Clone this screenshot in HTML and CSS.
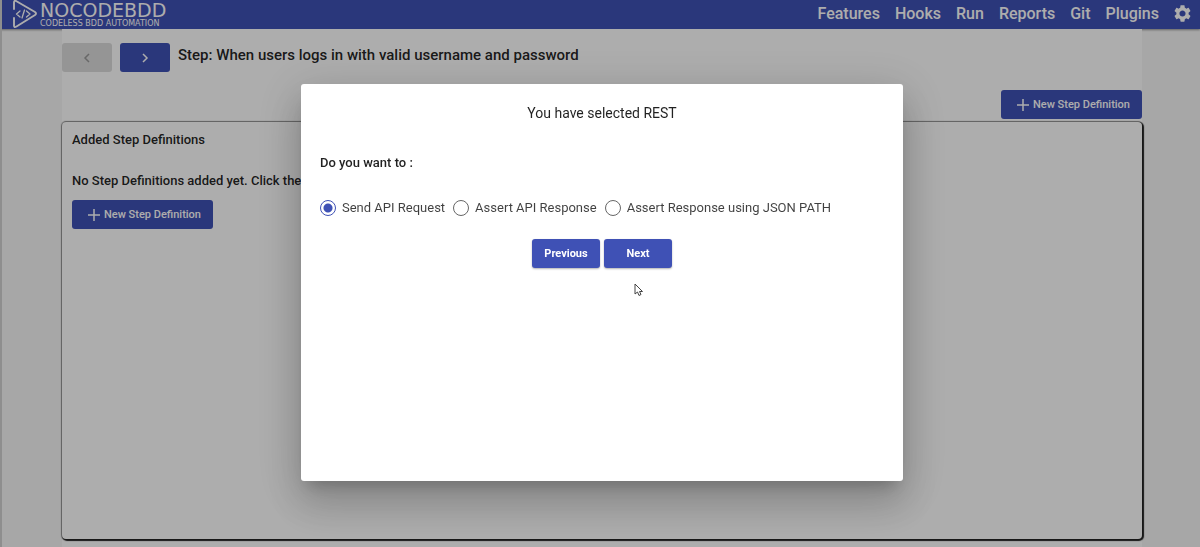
FILE: index.html
```
<!DOCTYPE html>
<html lang="en">
<head>
    <meta charset="UTF-8">
    <meta name="viewport" content="width=device-width, initial-scale=1.0">
    <title>NoCodeBDD</title>
    <link rel="stylesheet" href="styles.css">
</head>
<body>
    <header class="topbar">
        <a href="#" class="logo">
            <svg class="logo-mark" viewBox="0 0 26 30" fill="none" stroke="currentColor" stroke-linecap="round" stroke-linejoin="round">
                <path d="M2 9V2.500Q2 0 4.500 1.200L23 12Q25 13.500 23 15L4.500 26.500Q2 28 2 25.500V18" stroke-width="1.900"/>
                <path d="M8 11L4.500 14L8 17M14.500 11L18 14L14.500 17M12.500 10L10 18" stroke-width="1.300"/>
            </svg>
            <span class="logo-text">
                <span class="logo-name">NOCODEBDD</span>
                <span class="logo-tagline">CODELESS BDD AUTOMATION</span>
            </span>
        </a>
        <nav class="menu">
            <a href="#">Features</a>
            <a href="#">Hooks</a>
            <a href="#">Run</a>
            <a href="#">Reports</a>
            <a href="#">Git</a>
            <a href="#">Plugins</a>
            <a href="#" class="settings" aria-label="Settings">
                <svg viewBox="2 2 20 20" fill="currentColor">
                    <path d="M19.140 12.940c.04-.3.06-.61.06-.94 0-.32-.02-.64-.07-.94l2.030-1.580c.18-.14.23-.41.12-.61l-1.920-3.320c-.12-.22-.37-.29-.59-.22l-2.390.96c-.5-.38-1.030-.7-1.620-.94l-.36-2.540c-.04-.24-.24-.41-.48-.41h-3.840c-.24 0-.43.17-.47.41l-.36 2.540c-.59.24-1.130.57-1.620.94l-2.390-.96c-.22-.08-.47 0-.59.22L2.740 8.870c-.12.21-.08.47.12.61l2.030 1.580c-.05.3-.09.63-.09.94s.02.64.07.94l-2.030 1.580c-.18.14-.23.41-.12.61l1.920 3.320c.12.22.37.29.59.22l2.390-.96c.5.38 1.030.7 1.620.94l.36 2.540c.05.24.24.41.48.41h3.840c.24 0 .44-.17.47-.41l.36-2.540c.59-.24 1.130-.56 1.620-.94l2.390.96c.22.08.47 0 .59-.22l1.920-3.320c.12-.22.07-.47-.12-.61l-2.010-1.580zM12 15.600c-1.980 0-3.600-1.620-3.600-3.600s1.620-3.600 3.600-3.600 3.600 1.620 3.600 3.600-1.620 3.600-3.600 3.600z"/>
                </svg>
            </a>
        </nav>
    </header>

    <main class="page">
        <div class="step-header">
            <button type="button" class="btn btn-arrow" aria-label="Previous step" disabled>
                <svg viewBox="0 0 8 10"><path d="M6 1L2 5L6 9"/></svg>
            </button>
            <button type="button" class="btn btn-arrow" aria-label="Next step">
                <svg viewBox="0 0 8 10"><path d="M2 1L6 5L2 9"/></svg>
            </button>
            <h1>Step: When users logs in with valid username and password</h1>
        </div>
        <div class="actions">
            <button type="button" class="btn btn-add">
                <svg viewBox="0 0 12 12"><path d="M6 0V12M0 6H12"/></svg>
                New Step Definition
            </button>
        </div>
        <section class="card">
            <h2>Added Step Definitions</h2>
            <p>No Step Definitions added yet. Click the</p>
            <button type="button" class="btn btn-add">
                <svg viewBox="0 0 12 12"><path d="M6 0V12M0 6H12"/></svg>
                New Step Definition
            </button>
        </section>
    </main>

    <div class="backdrop">
        <form class="dialog" role="dialog" aria-labelledby="dialog-title">
            <h2 id="dialog-title">You have selected REST</h2>
            <fieldset>
                <legend>Do you want to :</legend>
                <div class="options">
                    <label><input type="radio" name="action" value="send" checked>Send API Request</label>
                    <label><input type="radio" name="action" value="response">Assert API Response</label>
                    <label><input type="radio" name="action" value="json">Assert Response using JSON PATH</label>
                </div>
            </fieldset>
            <div class="dialog-buttons">
                <button type="button" class="btn">Previous</button>
                <button type="button" class="btn">Next</button>
            </div>
        </form>
    </div>

    <svg class="cursor" viewBox="0 0 9 14" aria-hidden="true">
        <path d="M1 1V11L3.500 9L5 12.500L7 11.500L5.500 8.500H8.500Z"/>
    </svg>
</body>
</html>
```

FILE: styles.css
```
* {
    margin: 0;
    padding: 0;
    box-sizing: border-box;
}

body {
    display: flex;
    flex-direction: column;
    min-height: 100vh;
    background: #f6f6f6;
    border-left: 2px solid #d2d2d2;
    font-family: Roboto, sans-serif;
    color: rgba(0, 0, 0, 0.87);
}

/* Top bar */
.topbar {
    display: flex;
    justify-content: space-between;
    height: 29px;
    margin-left: -2px;
    padding: 0 9px 0 12px;
    background: #3f51b5;
    box-shadow: 0 1px 2px rgba(0, 0, 0, 0.4);
    color: #fff;
}

.topbar a {
    color: inherit;
    text-decoration: none;
}

.logo {
    display: flex;
    gap: 2px;
}

.logo-mark {
    width: 26px;
    height: 30px;
}

.logo-text {
    display: flex;
    flex-direction: column;
    padding-top: 1px;
    font-family: "DejaVu Sans", sans-serif;
}

.logo-name {
    font-size: 19px;
    line-height: 19px;
}

.logo-tagline {
    font-size: 8px;
    line-height: 8px;
}

.menu {
    display: flex;
    align-items: center;
    gap: 15px;
    padding-bottom: 3px;
    font-size: 16px;
    font-weight: 500;
}

.settings svg {
    display: block;
    width: 17px;
    height: 17px;
}

/* Buttons */
.btn {
    height: 29px;
    min-width: 68px;
    padding: 0 12px;
    border: none;
    border-radius: 3px;
    background: #3f51b5;
    color: #fff;
    font-family: inherit;
    font-size: 11px;
    font-weight: 500;
    cursor: pointer;
}

.btn svg {
    fill: none;
    stroke: currentColor;
}

.btn-arrow {
    min-width: 50px;
}

.btn-arrow svg {
    width: 8px;
    height: 10px;
    stroke-width: 1.5;
    vertical-align: middle;
}

.btn-arrow:disabled {
    background: #dcdcdc;
    color: #9a9a9a;
    cursor: default;
}

.btn-add {
    display: flex;
    align-items: center;
    gap: 4px;
    padding: 0 12px 0 16px;
}

.btn-add svg {
    width: 12px;
    height: 12px;
    stroke-width: 1.5;
}

/* Step page */
.page {
    flex: 1;
    display: flex;
    flex-direction: column;
    margin: 0 58px 0 60px;
    padding: 14px 0 8px;
    background: #fff;
}

.step-header {
    display: flex;
    gap: 8px;
}

.step-header h1 {
    font-size: 15px;
    font-weight: 500;
    line-height: 24px;
}

.actions {
    display: flex;
    justify-content: flex-end;
    padding: 18px 0 3px;
}

.card {
    flex: 1;
    padding: 8px 10px;
    border-radius: 4px;
    box-shadow: 1px 1px 1px 1px #222, 0 0 1px 1px #999;
    background: #fff;
}

.card h2,
.card p {
    margin-bottom: 21px;
    font-size: 13px;
    font-weight: 500;
    line-height: 20px;
}

.card p {
    margin-bottom: 9px;
}

/* Dialog */
.backdrop {
    position: fixed;
    inset: 0;
    display: flex;
    justify-content: center;
    align-items: flex-start;
    padding: 84px 0 0 4px;
    background: rgba(0, 0, 0, 0.32);
}

.dialog {
    width: 602px;
    max-width: 90%;
    min-height: 397px;
    padding: 19px;
    border-radius: 3px;
    background: #fff;
    box-shadow: 0 11px 15px -7px rgba(0, 0, 0, 0.2),
                0 24px 38px 3px rgba(0, 0, 0, 0.14),
                0 9px 46px 8px rgba(0, 0, 0, 0.12);
}

.dialog h2 {
    margin-bottom: 30px;
    font-size: 14px;
    font-weight: 400;
    line-height: 20px;
    text-align: center;
}

.dialog fieldset {
    border: none;
}

.dialog legend {
    font-size: 13px;
    font-weight: 500;
    line-height: 20px;
}

.options {
    display: flex;
    flex-wrap: wrap;
    gap: 8px;
    padding: 25px 0 21px;
}

.options label {
    display: flex;
    align-items: center;
    gap: 6px;
    font-size: 13px;
    line-height: 20px;
    color: rgba(0, 0, 0, 0.75);
}

.options input {
    appearance: none;
    width: 16px;
    height: 16px;
    border: 1px solid #666;
    border-radius: 50%;
}

.options input:checked {
    border-color: #3f51b5;
    background: radial-gradient(circle, #3f51b5 4px, transparent 5px);
}

.dialog-buttons {
    display: flex;
    justify-content: center;
    gap: 4px;
}

.dialog-buttons .btn {
    font-weight: 700;
    box-shadow: 0 1px 2px rgba(0, 0, 0, 0.3);
}

/* Mouse pointer over the dialog */
.cursor {
    position: fixed;
    top: 283px;
    left: 634px;
    width: 9px;
    height: 14px;
    fill: #fff;
    stroke: #444;
}
```
